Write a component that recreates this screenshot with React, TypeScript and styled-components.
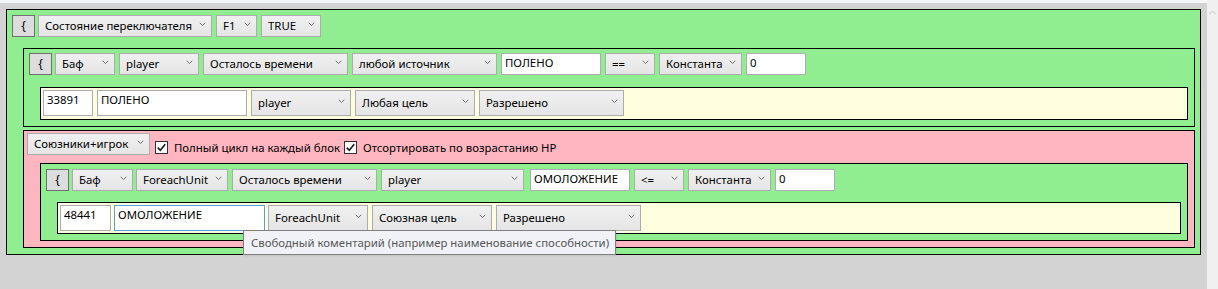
import styled, { createGlobalStyle } from "styled-components";

const GlobalStyle = createGlobalStyle`
  html, body, #root {
    margin: 0;
    padding: 0;
    height: 100%;
  }
  body {
    font-family: "Noto Sans", "Open Sans", sans-serif;
    font-size: 11.4px;
    color: #000;
    background: #d3d3d3;
  }
  * {
    box-sizing: border-box;
  }
`;

const Window = styled.div`
  display: flex;
  height: 100vh;
  overflow: hidden;
`;

const Main = styled.div`
  flex: 1;
  display: flex;
  flex-direction: column;
`;

const TopStrip = styled.div`
  height: 3px;
  background: #f4f6f9;
`;

const Canvas = styled.div`
  flex: 1;
  background: #d3d3d3;
  padding: 6px;
`;

const ScrollTrack = styled.div`
  width: 11px;
  background: #f0f0f0;
  display: flex;
  justify-content: center;
  align-items: flex-start;
  padding-top: 10px;
`;

const Block = styled.div<{ $bg: string; $pad: string; $mt?: number; $ml?: number }>`
  border: 1px solid #000;
  background: ${(p) => p.$bg};
  padding: ${(p) => p.$pad};
  margin-top: ${(p) => p.$mt ?? 0}px;
  margin-left: ${(p) => p.$ml ?? 0}px;
`;

const Row = styled.div<{ $h: number; $align?: string }>`
  display: flex;
  align-items: ${(p) => p.$align ?? "stretch"};
  height: ${(p) => p.$h}px;
`;

const Brace = styled.div`
  width: 23px;
  border: 1px solid #707070;
  background: #dddddd;
  display: flex;
  align-items: center;
  justify-content: center;
  padding-bottom: 1px;
  font-size: 12px;
`;

const ComboFrame = styled.div<{ $w: number; $ml?: number }>`
  width: ${(p) => p.$w}px;
  margin-left: ${(p) => p.$ml ?? 0}px;
  border: 1px solid #acacac;
  background: linear-gradient(#f0f0f0, #e5e5e5);
  display: flex;
  align-items: center;
  justify-content: space-between;
  padding: 0 5px 1px 6px;
  white-space: nowrap;
  overflow: hidden;
`;

const Arrow = styled.svg`
  flex: none;
  margin-top: -3px;
`;

const TextField = styled.div<{ $w: number; $ml?: number; $focused?: boolean }>`
  position: relative;
  width: ${(p) => p.$w}px;
  margin-left: ${(p) => p.$ml ?? 0}px;
  border: 1px solid ${(p) => (p.$focused ? "#569de5" : "#abadb3")};
  background: #fff;
  padding: 1px 3px 0;
  line-height: 16px;
  white-space: nowrap;
`;

const CheckBox = styled.div<{ $ml?: number }>`
  width: 13px;
  height: 13px;
  margin-left: ${(p) => p.$ml ?? 0}px;
  margin-bottom: 1px;
  border: 1px solid #333;
  background: #fff;
  display: flex;
  align-items: center;
  justify-content: center;
`;

const CheckLabel = styled.span`
  margin-left: 6px;
  margin-right: 4px;
  line-height: 16px;
  margin-bottom: -1px;
  white-space: nowrap;
`;

const Tooltip = styled.div`
  position: absolute;
  left: 128px;
  top: 24px;
  z-index: 5;
  height: 25px;
  padding: 0 6px 0 7px;
  border: 1px solid #808080;
  background: #f1f2f7;
  color: #575757;
  display: flex;
  align-items: center;
  white-space: nowrap;
  box-shadow: 1px 1px 2px rgba(0, 0, 0, 0.08);
`;

const ScrollUp = styled.svg`
  display: block;
`;

function Combo({ w, ml, children }: { w: number; ml?: number; children: string }) {
  return (
    <ComboFrame $w={w} $ml={ml}>
      <span>{children}</span>
      <Arrow width="7" height="5" viewBox="0 0 7 5">
        <polyline points="0.8,0.8 3.5,3.6 6.2,0.8" fill="none" stroke="#707070" strokeWidth="1" />
      </Arrow>
    </ComboFrame>
  );
}

function Check({ ml }: { ml?: number }) {
  return (
    <CheckBox $ml={ml}>
      <svg width="11" height="11" viewBox="0 0 11 11">
        <polyline points="1.8,5.6 4.3,8.2 9.2,2.2" fill="none" stroke="#1a1a1a" strokeWidth="1.6" />
      </svg>
    </CheckBox>
  );
}

const GREEN = "#90ee90";
const PINK = "#ffb6c1";
const YELLOW = "#ffffe0";

export default function App() {
  return (
    <>
      <GlobalStyle />
      <Window>
        <Main>
          <TopStrip />
          <Canvas>
            <Block $bg={GREEN} $pad="5px 5px 6px 5px">
              <Row $h={22}>
                <Brace>{"{"}</Brace>
                <Combo w={174} ml={3}>Состояние переключателя</Combo>
                <Combo w={41} ml={4}>F1</Combo>
                <Combo w={60} ml={4}>TRUE</Combo>
              </Row>

              <Block $bg={GREEN} $pad="4px 6px 6px 5px" $mt={11} $ml={11}>
                <Row $h={22}>
                  <Brace>{"{"}</Brace>
                  <Combo w={60} ml={3}>Баф</Combo>
                  <Combo w={80} ml={4}>player</Combo>
                  <Combo w={145} ml={4}>Осталось времени</Combo>
                  <Combo w={145} ml={4}>любой источник</Combo>
                  <TextField $w={100} $ml={4}>ПОЛЕНО</TextField>
                  <Combo w={50} ml={4}>==</Combo>
                  <Combo w={83} ml={4}>Константа</Combo>
                  <TextField $w={60} $ml={4}>0</TextField>
                </Row>
                <Block $bg={YELLOW} $pad="2px 2px 3px 2px" $mt={12} $ml={11}>
                  <Row $h={26}>
                    <TextField $w={50}>33891</TextField>
                    <TextField $w={150} $ml={4}>ПОЛЕНО</TextField>
                    <Combo w={100} ml={4}>player</Combo>
                    <Combo w={120} ml={4}>Любая цель</Combo>
                    <Combo w={145} ml={4}>Разрешено</Combo>
                  </Row>
                </Block>
              </Block>

              <Block $bg={PINK} $pad="2px 6px 6px 3px" $mt={3} $ml={11}>
                <Row $h={22} $align="flex-end">
                  <ComboFrame $w={123} style={{ alignSelf: "stretch" }}>
                    <span>Союзники+игрок</span>
                    <Arrow width="7" height="5" viewBox="0 0 7 5">
                      <polyline points="0.8,0.8 3.5,3.6 6.2,0.8" fill="none" stroke="#707070" strokeWidth="1" />
                    </Arrow>
                  </ComboFrame>
                  <Check ml={5} />
                  <CheckLabel>Полный цикл на каждый блок</CheckLabel>
                  <Check />
                  <CheckLabel>Отсортировать по возрастанию HP</CheckLabel>
                </Row>

                <Block $bg={GREEN} $pad="5px 6px 6px 5px" $mt={8} $ml={13}>
                  <Row $h={22}>
                    <Brace>{"{"}</Brace>
                    <Combo w={61} ml={3}>Баф</Combo>
                    <Combo w={92} ml={3}>ForeachUnit</Combo>
                    <Combo w={145} ml={4}>Осталось времени</Combo>
                    <Combo w={143} ml={4}>player</Combo>
                    <TextField $w={100} $ml={6}>ОМОЛОЖЕНИЕ</TextField>
                    <Combo w={50} ml={4}>{"<="}</Combo>
                    <Combo w={83} ml={4}>Константа</Combo>
                    <TextField $w={60} $ml={4}>0</TextField>
                  </Row>
                  <Block $bg={YELLOW} $pad="2px" $mt={11} $ml={11}>
                    <Row $h={26}>
                      <TextField $w={51}>48441</TextField>
                      <TextField $w={151} $ml={3} $focused>
                        ОМОЛОЖЕНИЕ
                        <Tooltip>Свободный коментарий (например наименование способности)</Tooltip>
                      </TextField>
                      <Combo w={100} ml={3}>ForeachUnit</Combo>
                      <Combo w={120} ml={4}>Союзная цель</Combo>
                      <Combo w={145} ml={4}>Разрешено</Combo>
                    </Row>
                  </Block>
                </Block>
              </Block>
            </Block>
          </Canvas>
        </Main>
        <ScrollTrack>
          <ScrollUp width="7" height="5" viewBox="0 0 7 5">
            <polyline points="0.5,4.2 3.5,1 6.5,4.2" fill="none" stroke="#c2c2c2" strokeWidth="1" />
          </ScrollUp>
        </ScrollTrack>
      </Window>
    </>
  );
}
